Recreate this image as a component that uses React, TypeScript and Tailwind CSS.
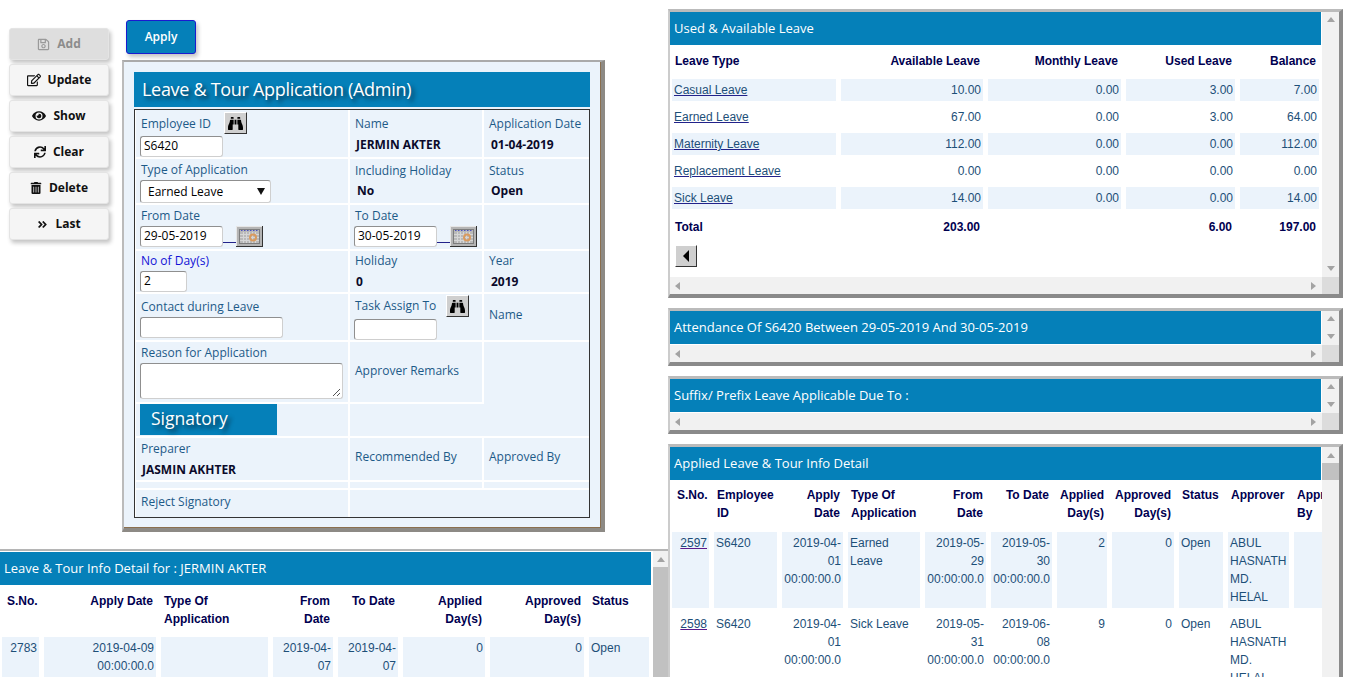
import React from "react";
import { FaRegSave, FaRegEdit, FaEye, FaSync, FaTrashAlt, FaAngleDoubleRight, FaBinoculars } from "react-icons/fa";

const ui = "font-['Open_Sans',sans-serif]";
const arial = "font-['Liberation_Sans',Arial,sans-serif]";
const label = `text-[12px] leading-[16px] text-[#1d5a88] ${ui}`;
const value = `text-[12px] leading-[16px] font-bold text-[#0a0a2a] ${ui}`;
const input = `block h-[21px] rounded-[3px] border border-[#8f8f8f] border-b-[#cfcfcf] border-r-[#cfcfcf] bg-white px-[3px] text-[12px] text-black ${ui}`;
const cell = "bg-[#ebf3fb] px-[5px] min-w-0";

function Tri({ dir }: { dir: "up" | "down" | "left" | "right" }) {
  const points = { up: "4,1 8,6 0,6", down: "0,1 8,1 4,6", left: "6,0 6,8 1,4", right: "1,0 1,8 6,4" }[dir];
  return (
    <svg width="8" height="8" viewBox="0 0 8 8" className="block">
      <polygon points={points} fill="#a3a3a3" />
    </svg>
  );
}

function SideBtn({ icon, text, disabled }: { icon: React.ReactNode; text: string; disabled?: boolean }) {
  return (
    <div
      className={`flex h-[32px] w-[100px] items-center justify-center gap-[7px] rounded-[3px] border border-[#e4e4e4] text-[12px] font-bold shadow-[2px_3px_4px_#c4c4c4] ${ui} ${
        disabled ? "bg-[#dedede] text-[#8c8c8c]" : "bg-[#f5f5f5] text-[#111]"
      }`}
    >
      {icon}
      <span>{text}</span>
    </div>
  );
}

function Binoc({ className = "" }: { className?: string }) {
  return (
    <div className={`flex h-[22px] w-[23px] items-center justify-center border border-t-white border-l-white border-r-[#333] border-b-[#333] bg-[#cfcfcf] ${className}`}>
      <FaBinoculars size={15} color="#000" />
    </div>
  );
}

function Calendar() {
  return (
    <svg width="27" height="21" viewBox="0 0 27 21" className="block shrink-0">
      <rect width="27" height="21" fill="#333" />
      <rect width="26" height="20" fill="#e6e6e6" />
      <rect x="1" y="1" width="25" height="19" fill="#b4b4b4" />
      <rect x="3" y="3" width="21" height="15" fill="#7d7d7d" />
      <rect x="4" y="4" width="19" height="13" fill="#b9b9b9" />
      <path d="M7.500 6v11M10.500 6v11M13.500 6v11M16.500 6v11M19.500 6v11M4 8.500h19M4 11.500h19M4 14.500h19" stroke="#d6d6d6" strokeWidth="1" />
      <path d="M5 4.500h17" stroke="#4a50c0" strokeWidth="1" strokeDasharray="1.500 1.500" />
      <circle cx="17" cy="11.500" r="3" fill="none" stroke="#d99a5e" strokeWidth="2" />
    </svg>
  );
}

function DateField({ v }: { v: string }) {
  return (
    <div className="flex items-end">
      <div className={`${input} w-[83px]`}>{v}</div>
      <div className="mb-[4px] h-[1px] w-[13px] bg-[#22228a]" />
      <Calendar />
    </div>
  );
}

function FormPanel() {
  return (
    <div className="h-[472px] w-[483px] border-t-2 border-l-2 border-t-[#aaa] border-l-[#bbb] border-r-4 border-b-4 border-r-[#8d8a85] border-b-[#8d8a85] bg-[#ebf3fb] pt-[10px] pl-[10px] shadow-[inset_-1px_-1px_0_#8a6f4f]">
      <div className={`flex h-[35px] w-[456px] items-center bg-[#0580b9] pl-[8px] text-[18px] tracking-[-0.3px] text-white [text-shadow:3px_3px_4px_#083048] ${ui}`}>
        Leave &amp; Tour Application (Admin)
      </div>
      <div className="mt-[2px] grid w-[456px] grid-cols-[212px_132px_105px] grid-rows-[47px_44px_44px_41px_46px_60px_32px_42px_6px_27px] gap-[2px] border border-[#333] bg-white pl-[1px]">
        <div className={`${cell} relative pt-[6px]`}>
          <div className={label}>Employee ID</div>
          <Binoc className="absolute top-[2px] left-[88px]" />
          <div className={`${input} absolute top-[26px] left-[4px] w-[83px]`}>S6420</div>
        </div>
        <div className={`${cell} pt-[6px]`}>
          <div className={label}>Name</div>
          <div className={`${value} mt-[5px] pl-[1px]`}>JERMIN AKTER</div>
        </div>
        <div className={`${cell} pt-[6px]`}>
          <div className={label}>Application Date</div>
          <div className={`${value} mt-[5px] pl-[2px]`}>01-04-2019</div>
        </div>

        <div className={`${cell} pt-[3px] pl-[4px]`}>
          <div className={`${label} pl-[1px]`}>Type of Application</div>
          <div className={`mt-[2px] flex h-[23px] w-[131px] items-center justify-between rounded-[3px] border border-[#8f8f8f] border-b-[#cfcfcf] border-r-[#cfcfcf] bg-white pr-[5px] pl-[7px] text-[12px] text-black ${ui}`}>
            <span>Earned Leave</span>
            <svg width="8" height="7" viewBox="0 0 8 7"><polygon points="0,0 8,0 4,7" fill="#111" /></svg>
          </div>
        </div>
        <div className={`${cell} pt-[4px]`}>
          <div className={label}>Including Holiday</div>
          <div className={`${value} mt-[4px] pl-[2px]`}>No</div>
        </div>
        <div className={`${cell} pt-[4px]`}>
          <div className={label}>Status</div>
          <div className={`${value} mt-[4px] pl-[2px]`}>Open</div>
        </div>

        <div className={`${cell} pt-[3px] pl-[4px]`}>
          <div className={`${label} pl-[1px]`}>From Date</div>
          <div className="mt-[2px]"><DateField v="29-05-2019" /></div>
        </div>
        <div className={`${cell} pt-[3px] pl-[4px]`}>
          <div className={`${label} pl-[1px]`}>To Date</div>
          <div className="mt-[2px]"><DateField v="30-05-2019" /></div>
        </div>
        <div className={cell} />

        <div className={`${cell} pt-[2px] pl-[4px]`}>
          <div className={`text-[12px] leading-[16px] text-[#1212d6] pl-[1px] ${ui}`}>No of Day(s)</div>
          <div className={`${input} mt-[2px] w-[47px]`}>2</div>
        </div>
        <div className={`${cell} pt-[2px]`}>
          <div className={label}>Holiday</div>
          <div className={`${value} mt-[5px] pl-[1px]`}>0</div>
        </div>
        <div className={`${cell} pt-[2px]`}>
          <div className={label}>Year</div>
          <div className={`${value} mt-[5px] pl-[2px]`}>2019</div>
        </div>

        <div className={`${cell} pt-[5px] pl-[4px]`}>
          <div className={`${label} pl-[1px]`}>Contact during Leave</div>
          <div className={`${input} mt-[2px] w-[143px]`} />
        </div>
        <div className={`${cell} relative pt-[4px] pl-[4px]`}>
          <div className={`${label} pl-[1px]`}>Task Assign To</div>
          <Binoc className="absolute top-[1px] left-[96px]" />
          <div className={`${input} mt-[5px] w-[83px]`} />
        </div>
        <div className={`${cell} flex items-center pb-[5px] ${label}`}>Name</div>

        <div className={`${cell} pt-[3px] pl-[4px]`}>
          <div className={`${label} pl-[1px]`}>Reason for Application</div>
          <div className={`${input} relative mt-[2px] h-[36px] w-[203px]`}>
            <svg width="9" height="9" viewBox="0 0 9 9" className="absolute right-[1px] bottom-[1px]">
              <path d="M1 8 8 1M5 8 8 5" stroke="#555" strokeWidth="1" fill="none" />
            </svg>
          </div>
        </div>
        <div className={`${cell} flex items-center pb-[2px] ${label}`}>Approver Remarks</div>
        <div className={`${cell} row-span-2`} />

        <div className={`${cell} pl-[4px]`}>
          <div className={`flex h-[31px] w-[137px] items-center bg-[#0580b9] pb-[2px] pl-[11px] text-[17.500px] text-white [text-shadow:3px_3px_4px_#083048] ${ui}`}>Signatory</div>
        </div>
        <div className={`${cell} -mr-[2px]`} />

        <div className={`${cell} pt-[3px]`}>
          <div className={label}>Preparer</div>
          <div className={`${value} mt-[5px] pl-[1px]`}>JASMIN AKHTER</div>
        </div>
        <div className={`${cell} flex items-center pb-[4px] ${label}`}>Recommended By</div>
        <div className={`${cell} flex items-center pb-[4px] ${label}`}>Approved By</div>

        <div className={cell} />
        <div className={cell} />
        <div className={cell} />

        <div className={`${cell} flex items-center pb-[4px] ${label}`}>Reject Signatory</div>
        <div className={`${cell} col-span-2`} />
      </div>
    </div>
  );
}

function PanelTitle({ text, className = "" }: { text: string; className?: string }) {
  return (
    <div className={`flex h-[33px] shrink-0 items-center bg-[#0580b9] pl-[4px] text-[13px] text-white ${ui} ${className}`}>
      {text}
    </div>
  );
}

function HBar() {
  return (
    <div className="flex h-[17px] shrink-0 bg-[#f1f1f1]">
      <div className="flex flex-1 items-center justify-between px-[4px]">
        <Tri dir="left" />
        <Tri dir="right" />
      </div>
      <div className="w-[17px] bg-[#dcdcdc]" />
    </div>
  );
}

function VBar() {
  return (
    <div className="flex w-[17px] shrink-0 flex-col items-center justify-between bg-[#f1f1f1] py-[4px]">
      <Tri dir="up" />
      <Tri dir="down" />
    </div>
  );
}

function ShortPanel({ text }: { text: string }) {
  return (
    <div className="h-[58px] shrink-0 border-t-[3px] border-l-2 border-t-[#bbb] border-l-[#ccc] border-r-4 border-b-4 border-r-[#8a8a8a] border-b-[#8a8a8a]">
      <div className="flex h-[34px] bg-white">
        <div className="min-w-0 flex-1 pr-[1px]"><PanelTitle text={text} /></div>
        <VBar />
      </div>
      <HBar />
    </div>
  );
}

const thR = "align-top pt-[1px] pb-[5px] pr-[3px] pl-[2px] text-right font-bold text-[#000050]";
const thL = "align-top pt-[1px] pb-[5px] pr-[2px] pl-[3px] text-left font-bold text-[#000050]";
const thLowR = "align-top pt-[2px] pb-[4px] pr-[3px] pl-[2px] text-right font-bold text-[#000050]";
const thLowL = "align-top pt-[2px] pb-[4px] pr-[2px] pl-[3px] text-left font-bold text-[#000050]";
const thMid = "align-middle pt-[1px] pb-[3px] pr-[3px] pl-[3px] font-bold text-[#000050]";
const td = "bg-[#ebf3fb] align-top px-[2px] pt-[2px] pb-[2px] text-[#1d4f78]";

const leaves = [
  ["Casual Leave", "10.00", "0.00", "3.00", "7.00"],
  ["Earned Leave", "67.00", "0.00", "3.00", "64.00"],
  ["Maternity Leave", "112.00", "0.00", "0.00", "112.00"],
  ["Replacement Leave", "0.00", "0.00", "0.00", "0.00"],
  ["Sick Leave", "14.00", "0.00", "0.00", "14.00"],
];

function LeavePanel() {
  return (
    <div className="h-[289px] shrink-0 border-t-[3px] border-l-2 border-t-[#bbb] border-l-[#ccc] border-r-4 border-b-4 border-r-[#8a8a8a] border-b-[#8a8a8a]">
      <div className="flex h-[265px]">
        <div className="min-w-0 flex-1 overflow-hidden">
          <PanelTitle text="Used & Available Leave" className="mr-[1px]" />
          <table className={`-ml-[3px] w-[657px] table-fixed border-separate border-spacing-[5px] text-[12px] leading-[18px] ${arial}`}>
            <colgroup>
              <col className="w-[164px]" />
              <col className="w-[142px]" />
              <col className="w-[133px]" />
              <col className="w-[109px]" />
              <col className="w-[79px]" />
            </colgroup>
            <thead>
              <tr className="h-[24px]">
                <th className={`${thMid} text-left`}>Leave Type</th>
                <th className={`${thMid} text-right`}>Available Leave</th>
                <th className={`${thMid} text-right`}>Monthly Leave</th>
                <th className={`${thMid} text-right`}>Used Leave</th>
                <th className={`${thMid} text-right`}>Balance</th>
              </tr>
            </thead>
            <tbody>
              {leaves.map((r, i) => (
                <tr key={r[0]} className="h-[22px]">
                  {r.map((c, j) => (
                    <td
                      key={j}
                      className={`${i % 2 === 0 ? "bg-[#ebf3fb]" : ""} px-[2px] align-middle text-[#1d4f78] ${j === 0 ? "text-left underline decoration-[#22228a]" : "text-right"}`}
                    >
                      {c}
                    </td>
                  ))}
                </tr>
              ))}
              <tr className="h-[26px] font-bold text-[#000050]">
                <td className="pl-[3px] align-middle">Total</td>
                <td className="pr-[3px] text-right align-middle">203.00</td>
                <td />
                <td className="pr-[3px] text-right align-middle">6.00</td>
                <td className="pr-[3px] text-right align-middle">197.00</td>
              </tr>
            </tbody>
          </table>
          <div className="ml-[5px] flex h-[22px] w-[22px] items-center justify-center border border-t-white border-l-white border-r-[#333] border-b-[#333] bg-[#cfcfcf]">
            <svg width="8" height="12" viewBox="0 0 8 12"><polygon points="7,0 7,12 1,6" fill="#000" /></svg>
          </div>
        </div>
        <VBar />
      </div>
      <HBar />
    </div>
  );
}

const applied = [
  {
    sno: "2597", emp: "S6420", apply: "2019-04-01 00:00:00.0", type: "Earned Leave", from: "2019-05-29 00:00:00.0", to: "2019-05-30 00:00:00.0",
    days: "2", appr: "0", status: "Open", approver: "ABUL HASNATH MD. HELAL",
  },
  {
    sno: "2598", emp: "S6420", apply: "2019-04-01 00:00:00.0", type: "Sick Leave", from: "2019-05-31 00:00:00.0", to: "2019-06-08 00:00:00.0",
    days: "9", appr: "0", status: "Open", approver: "ABUL HASNATH MD. HELAL",
  },
];

function AppliedPanel() {
  const plain = "align-top px-[2px] pt-[2px] text-[#1d4f78]";
  return (
    <div className="flex h-[300px] shrink-0 border-t-[3px] border-l-2 border-t-[#bbb] border-l-[#ccc] border-r-4 border-r-[#8a8a8a]">
      <div className="min-w-0 flex-1 overflow-hidden">
        <PanelTitle text="Applied Leave & Tour Info Detail" className="mr-[1px]" />
        <table className={`-ml-[3px] w-[692px] table-fixed border-separate border-spacing-[5px] text-[12px] leading-[18px] ${arial}`}>
          <colgroup>
            {["w-[37px]", "w-[63px]", "w-[61px]", "w-[72px]", "w-[61px]", "w-[61px]", "w-[50px]", "w-[62px]", "w-[44px]", "w-[61px]", "w-[60px]"].map((w, i) => (
              <col key={i} className={w} />
            ))}
          </colgroup>
          <thead>
            <tr>
              <th className="align-top pt-[1px] pb-[5px] pl-[5px] text-left font-bold text-[#000050]">S.No.</th>
              <th className={thL}>Employee ID</th>
              <th className={thR}>Apply Date</th>
              <th className={thL}>Type Of Application</th>
              <th className={thR}>From Date</th>
              <th className={thR}>To Date</th>
              <th className={thR}>Applied Day(s)</th>
              <th className={thR}>Approved Day(s)</th>
              <th className={thL}>Status</th>
              <th className={thL}>Approver</th>
              <th className={thL}>Approved By</th>
            </tr>
          </thead>
          <tbody>
            {applied.map((r, i) => (
              <tr key={r.sno}>
                <td className={`${i === 0 ? td : plain} text-right underline decoration-[#5a1a8a]`}>{r.sno}</td>
                {[
                  [r.emp, "text-left"],
                  [r.apply, "text-right"],
                  [r.type, "text-left"],
                  [r.from, "text-right"],
                  [r.to, "text-right"],
                  [r.days, "text-right"],
                  [r.appr, "text-right"],
                  [r.status, "text-left"],
                  [r.approver, "text-left"],
                  ["", "text-left"],
                ].map(([c, a], j) => (
                  <td key={j} className={`${i === 0 ? td : plain} ${a}`}>{c}</td>
                ))}
              </tr>
            ))}
          </tbody>
        </table>
      </div>
      <div className="flex w-[17px] shrink-0 flex-col items-center bg-[#f1f1f1] pt-[5px]">
        <Tri dir="up" />
        <div className="mt-[3px] h-[17px] w-full bg-[#c1c1c1]" />
      </div>
    </div>
  );
}

function BottomPanel() {
  const cols = ["w-[37px]", "w-[112px]", "w-[107px]", "w-[60px]", "w-[60px]", "w-[82px]", "w-[94px]", "w-[60px]"];
  const row: [string, string][] = [
    ["2783", "text-right"],
    ["2019-04-09 00:00:00.0", "text-right"],
    ["", "text-left"],
    ["2019-04-07", "text-right"],
    ["2019-04-07", "text-right"],
    ["0", "text-right"],
    ["0", "text-right"],
    ["Open", "text-left"],
  ];
  return (
    <div className="flex min-h-0 flex-1 overflow-hidden border-t-2 border-t-[#b5b5b5]">
      <div className="min-w-0 flex-1 overflow-hidden">
        <div className="mt-[1px]"><PanelTitle text="Leave & Tour Info Detail for : JERMIN AKTER" className="mr-[2px]" /></div>
        <table className={`-ml-[3px] w-[657px] table-fixed border-separate border-spacing-[5px] text-[12px] leading-[18px] ${arial}`}>
          <colgroup>
            {cols.map((w, i) => <col key={i} className={w} />)}
          </colgroup>
          <thead>
            <tr>
              <th className="align-top pt-[2px] pb-[4px] pl-[5px] text-left font-bold text-[#000050]">S.No.</th>
              <th className={thLowR}>Apply Date</th>
              <th className={thLowL}>Type Of Application</th>
              <th className={thLowR}>From Date</th>
              <th className={thLowR}>To Date</th>
              <th className={thLowR}>Applied Day(s)</th>
              <th className={thLowR}>Approved Day(s)</th>
              <th className={thLowL}>Status</th>
            </tr>
          </thead>
          <tbody>
            <tr>
              {row.map(([c, a], j) => (
                <td key={j} className={`${td} ${a}`}>{c}</td>
              ))}
            </tr>
          </tbody>
        </table>
      </div>
      <div className="flex w-[15px] shrink-0 flex-col items-center bg-[#f1f1f1] pt-[5px]">
        <Tri dir="up" />
        <div className="mt-[3px] w-full flex-1 bg-[#c1c1c1]" />
      </div>
    </div>
  );
}

export default function App() {
  return (
    <div className="flex h-[677px] w-[1363px] overflow-hidden bg-white">
      <div className="flex h-full w-[668px] shrink-0 flex-col">
        <div className="flex h-[549px] shrink-0">
          <div className="flex w-[122px] shrink-0 flex-col gap-[4px] pt-[28px] pl-[9px]">
            <SideBtn disabled icon={<FaRegSave size={13} color="#9a9a9a" />} text="Add" />
            <SideBtn icon={<FaRegEdit size={14} />} text="Update" />
            <SideBtn icon={<FaEye size={14} />} text="Show" />
            <SideBtn icon={<FaSync size={12} />} text="Clear" />
            <SideBtn icon={<FaTrashAlt size={12} />} text="Delete" />
            <SideBtn icon={<FaAngleDoubleRight size={11} />} text="Last" />
          </div>
          <div className="pt-[20px]">
            <div className={`ml-[4px] flex h-[34px] w-[70px] items-center justify-center rounded-[3px] border border-[#1a1ad0] bg-[#0580b9] text-[12px] font-semibold text-white shadow-[2px_3px_4px_#c4c4c4] ${ui}`}>
              Apply
            </div>
            <div className="mt-[6px]"><FormPanel /></div>
          </div>
        </div>
        <BottomPanel />
      </div>
      <div className="flex h-full w-[675px] shrink-0 flex-col gap-[10px] overflow-hidden pt-[9px]">
        <LeavePanel />
        <ShortPanel text="Attendance Of S6420 Between 29-05-2019 And 30-05-2019" />
        <ShortPanel text="Suffix/ Prefix Leave Applicable Due To :" />
        <AppliedPanel />
      </div>
    </div>
  );
}
